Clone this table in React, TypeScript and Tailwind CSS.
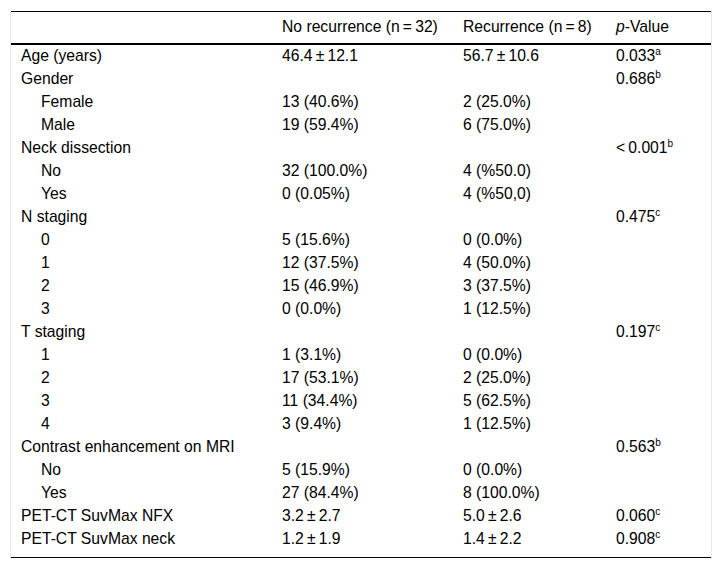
const T = "\u2009";

type Row = {
  label: string;
  indent?: boolean;
  a?: string;
  b?: string;
  p?: string;
  sup?: string;
};

const rows: Row[] = [
  { label: "Age (years)", a: `46.4${T}±${T}12.1`, b: `56.7${T}±${T}10.6`, p: "0.033", sup: "a" },
  { label: "Gender", p: "0.686", sup: "b" },
  { label: "Female", indent: true, a: "13 (40.6%)", b: "2 (25.0%)" },
  { label: "Male", indent: true, a: "19 (59.4%)", b: "6 (75.0%)" },
  { label: "Neck dissection", p: `<${T}0.001`, sup: "b" },
  { label: "No", indent: true, a: "32 (100.0%)", b: "4 (%50.0)" },
  { label: "Yes", indent: true, a: "0 (0.05%)", b: "4 (%50,0)" },
  { label: "N staging", p: "0.475", sup: "c" },
  { label: "0", indent: true, a: "5 (15.6%)", b: "0 (0.0%)" },
  { label: "1", indent: true, a: "12 (37.5%)", b: "4 (50.0%)" },
  { label: "2", indent: true, a: "15 (46.9%)", b: "3 (37.5%)" },
  { label: "3", indent: true, a: "0 (0.0%)", b: "1 (12.5%)" },
  { label: "T staging", p: "0.197", sup: "c" },
  { label: "1", indent: true, a: "1 (3.1%)", b: "0 (0.0%)" },
  { label: "2", indent: true, a: "17 (53.1%)", b: "2 (25.0%)" },
  { label: "3", indent: true, a: "11 (34.4%)", b: "5 (62.5%)" },
  { label: "4", indent: true, a: "3 (9.4%)", b: "1 (12.5%)" },
  { label: "Contrast enhancement on MRI", p: "0.563", sup: "b" },
  { label: "No", indent: true, a: "5 (15.9%)", b: "0 (0.0%)" },
  { label: "Yes", indent: true, a: "27 (84.4%)", b: "8 (100.0%)" },
  { label: "PET-CT SuvMax NFX", a: `3.2${T}±${T}2.7`, b: `5.0${T}±${T}2.6`, p: "0.060", sup: "c" },
  { label: "PET-CT SuvMax neck", a: `1.2${T}±${T}1.9`, b: `1.4${T}±${T}2.2`, p: "0.908", sup: "c" },
];

export default function App() {
  return (
    <div className="bg-white w-[721px] h-[568px] pt-[10px] pl-[10px] font-['Liberation_Sans',Arial,sans-serif] text-[15.7px] text-black">
      <div className="w-[702px] border-x border-[#e8e8e8] pt-[1px] pb-[1px]">
        <table className="w-full table-fixed border-collapse">
          <colgroup>
            <col className="w-[261px]" />
            <col className="w-[181px]" />
            <col className="w-[153px]" />
            <col />
          </colgroup>
          <thead>
            <tr className="h-[32px] border-t border-b-2 border-black text-left">
              <th className="px-[10px] font-normal"></th>
              <th className="px-[10px] font-normal">No recurrence (n{T}={T}32)</th>
              <th className="px-[10px] font-normal">Recurrence (n{T}={T}8)</th>
              <th className="px-[10px] font-normal">
                <i>p</i>-Value
              </th>
            </tr>
          </thead>
          <tbody className="border-b border-black">
            {rows.map((r, i) => {
              const last = i === rows.length - 1;
              const pad = last ? " pt-[1px] pb-[7px]" : " pt-[1px]";
              return (
                <tr key={i} className={last ? "h-[31px] leading-none" : "h-[23px] leading-none"}>
                  <td className={(r.indent ? "pl-[30px] pr-[10px]" : "px-[10px]") + pad}>{r.label}</td>
                  <td className={"px-[10px]" + pad}>{r.a}</td>
                  <td className={"px-[10px]" + pad}>{r.b}</td>
                  <td className={"px-[10px]" + pad}>
                    {r.p}
                    {r.sup && <sup className="text-[10px] relative -top-[6px]">{r.sup}</sup>}
                  </td>
                </tr>
              );
            })}
          </tbody>
        </table>
      </div>
    </div>
  );
}
